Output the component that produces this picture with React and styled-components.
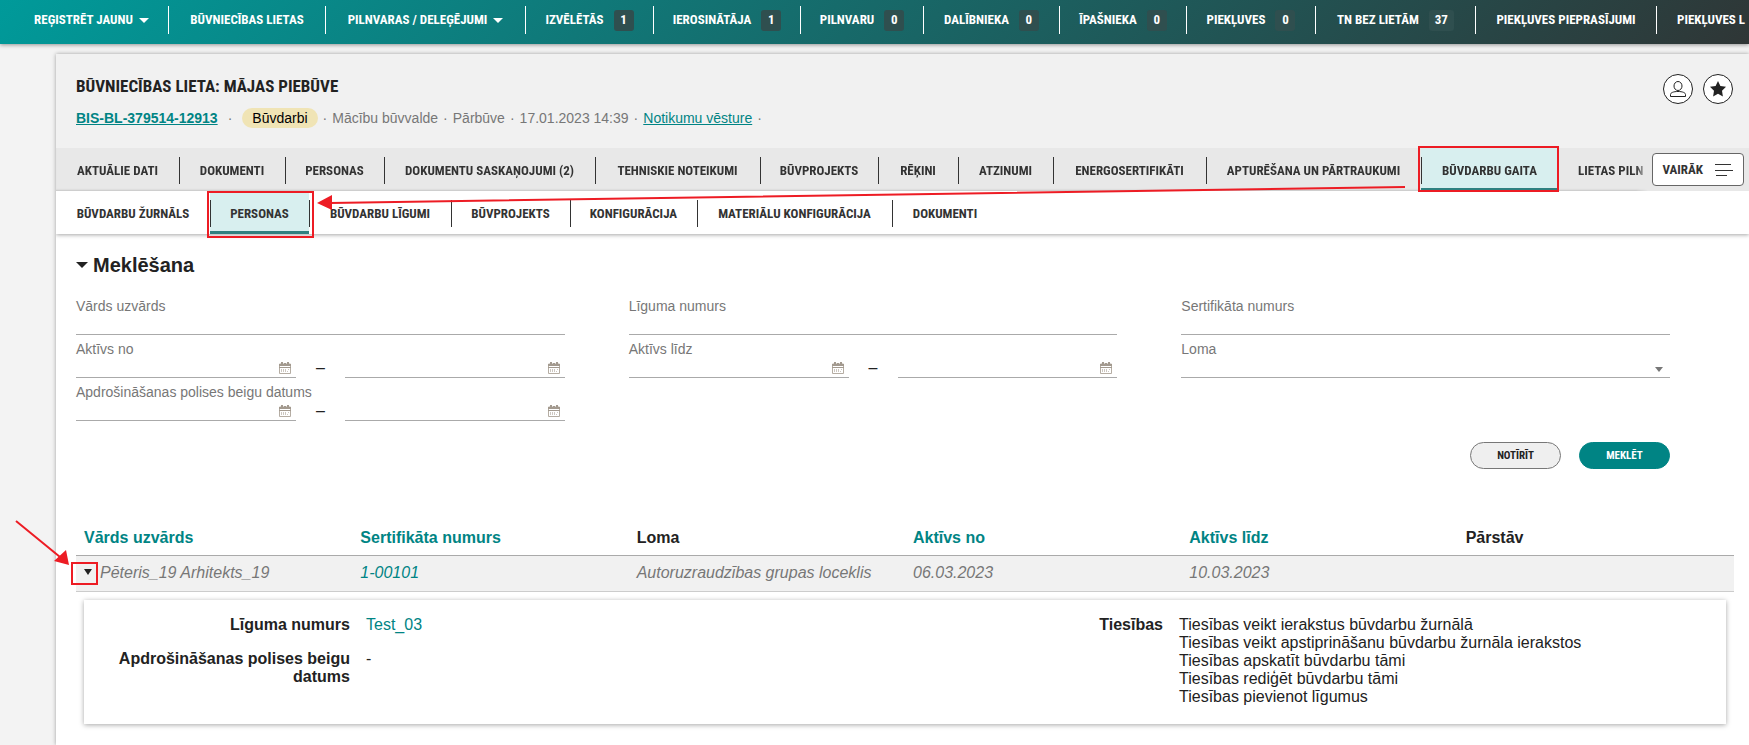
import React from "react";
import styled, { createGlobalStyle } from "styled-components";

const topLinks = [
  { label: "REĢISTRĒT JAUNU", width: 154, menu: true },
  { label: "BŪVNIECĪBAS LIETAS", width: 157 },
  { label: "PILNVARAS / DELEĢĒJUMI", width: 200, menu: true },
  { label: "IZVĒLĒTĀS", width: 128, count: 1 },
  { label: "IEROSINĀTĀJA", width: 147, count: 1 },
  { label: "PILNVARU", width: 123, count: 0 },
  { label: "DALĪBNIEKA", width: 136, count: 0 },
  { label: "ĪPAŠNIEKA", width: 127, count: 0 },
  { label: "PIEKĻUVES", width: 129, count: 0 },
  { label: "TN BEZ LIETĀM", width: 160, count: 37 },
  { label: "PIEKĻUVES PIEPRASĪJUMI", width: 181 },
  { label: "PIEKĻUVES L", width: 120 },
];

const caseTabs = [
  { label: "AKTUĀLIE DATI", width: 123 },
  { label: "DOKUMENTI", width: 106 },
  { label: "PERSONAS", width: 99 },
  { label: "DOKUMENTU SASKAŅOJUMI (2)", width: 211 },
  { label: "TEHNISKIE NOTEIKUMI", width: 165 },
  { label: "BŪVPROJEKTS", width: 118 },
  { label: "RĒĶINI", width: 80 },
  { label: "ATZINUMI", width: 95 },
  { label: "ENERGOSERTIFIKĀTI", width: 153 },
  { label: "APTURĒŠANA UN PĀRTRAUKUMI", width: 215 },
  { label: "BŪVDARBU GAITA", width: 137, active: true },
  { label: "LIETAS PILN", width: 110 },
];

const workTabs = [
  { label: "BŪVDARBU ŽURNĀLS", width: 154 },
  { label: "PERSONAS", width: 99, active: true },
  { label: "BŪVDARBU LĪGUMI", width: 142 },
  { label: "BŪVPROJEKTS", width: 119 },
  { label: "KONFIGURĀCIJA", width: 127 },
  { label: "MATERIĀLU KONFIGURĀCIJA", width: 195 },
  { label: "DOKUMENTI", width: 106 },
];

const columns = [
  { label: "Vārds uzvārds", sortable: true },
  { label: "Sertifikāta numurs", sortable: true },
  { label: "Loma" },
  { label: "Aktīvs no", sortable: true },
  { label: "Aktīvs līdz", sortable: true },
  { label: "Pārstāv" },
];

const rights = [
  "Tiesības veikt ierakstus būvdarbu žurnālā",
  "Tiesības veikt apstiprināšanu būvdarbu žurnāla ierakstos",
  "Tiesības apskatīt būvdarbu tāmi",
  "Tiesības rediģēt būvdarbu tāmi",
  "Tiesības pievienot līgumus",
];

const CalendarIcon = () => (
  <svg width="12" height="13" viewBox="0 0 12 13" aria-hidden="true">
    <path d="M.5 3h11v9.500H.5z" fill="#fff" stroke="#b5ada3" />
    <path d="M0 3h12v2H0zM2 1h2v2H2zM8 1h2v2H8zM5 2h2v1H5z" fill="#a39a8f" />
    <path d="M0 6h12v1H0z" fill="#a39a8f" />
    <path d="M2 8h1v3H2zM4 8h1v3H4zM6 8h1v3H6zM9 8h1v1H9zM8 10h1v1H8z" fill="#cdc7c0" />
  </svg>
);

const DateRange = ({ id, label }) => (
  <Field>
    <Label htmlFor={id}>{label}</Label>
    <Range>
      <DateBox>
        <Input id={id} type="text" />
        <CalendarIcon />
      </DateBox>
      <Dash>–</Dash>
      <DateBox>
        <Input type="text" aria-label={label} />
        <CalendarIcon />
      </DateBox>
    </Range>
  </Field>
);

const App = () => {
  return (
    <Page>
      <GlobalStyle />
      <TopBar>
        {topLinks.map((item) => (
          <TopLink key={item.label} href="#" $width={item.width}>
            {item.label}
            {item.menu && <Caret $size={5} />}
            {item.count !== undefined && <Count>{item.count}</Count>}
          </TopLink>
        ))}
      </TopBar>

      <Card>
        <Header>
          <div>
            <Title>BŪVNIECĪBAS LIETA: MĀJAS PIEBŪVE</Title>
            <Meta>
              <CaseLink href="#">BIS-BL-379514-12913</CaseLink>
              <Dot>·</Dot>
              <Stage>Būvdarbi</Stage>
              <span>·</span>
              <span>Mācību būvvalde</span>
              <span>·</span>
              <span>Pārbūve</span>
              <span>·</span>
              <span>17.01.2023 14:39</span>
              <span>·</span>
              <HistoryLink href="#">Notikumu vēsture</HistoryLink>
              <span>·</span>
            </Meta>
          </div>
          <HeaderActions>
            <RoundButton type="button" aria-label="Profils">
              <svg width="18" height="20" viewBox="0 0 18 20" fill="none" stroke="#222">
                <ellipse cx="9" cy="7" rx="4" ry="4.500" />
                <path d="M1.500 17.500v-2c0-1.800 3-3 7.500-3s7.500 1.200 7.500 3v2z" />
              </svg>
            </RoundButton>
            <RoundButton type="button" aria-label="Izlase">
              <svg width="18" height="18" viewBox="0 0 18 18" fill="#222">
                <path d="M9 1l2.400 5 5.600.8-4 4 .9 5.700L9 13.800l-4.900 2.700.9-5.700-4-4L6.600 6z" />
              </svg>
            </RoundButton>
          </HeaderActions>
        </Header>

        <CaseTabs>
          <TabStrip>
            {caseTabs.map((tab) => (
              <Tab key={tab.label} href="#" $width={tab.width} $active={tab.active}>
                {tab.label}
              </Tab>
            ))}
          </TabStrip>
          <MoreButton type="button">
            VAIRĀK
            <svg width="18" height="14" viewBox="0 0 18 14" stroke="#333">
              <path d="M0 1.500h16M0 7.500h18M1 12.500h11" />
            </svg>
          </MoreButton>
        </CaseTabs>

        <WorkTabs>
          {workTabs.map((tab) => (
            <Tab key={tab.label} href="#" $width={tab.width} $active={tab.active}>
              {tab.label}
            </Tab>
          ))}
        </WorkTabs>

        <SearchForm onSubmit={(e) => e.preventDefault()}>
          <SearchTitle>
            <Caret $size={6} />
            Meklēšana
          </SearchTitle>
          <Fields>
            <Field>
              <Label htmlFor="name">Vārds uzvārds</Label>
              <Input id="name" type="text" />
            </Field>
            <Field>
              <Label htmlFor="contract">Līguma numurs</Label>
              <Input id="contract" type="text" />
            </Field>
            <Field>
              <Label htmlFor="certificate">Sertifikāta numurs</Label>
              <Input id="certificate" type="text" />
            </Field>
            <DateRange id="activeFrom" label="Aktīvs no" />
            <DateRange id="activeTo" label="Aktīvs līdz" />
            <Field>
              <Label htmlFor="role">Loma</Label>
              <SelectBox>
                <Select id="role" />
                <Caret $size={4} />
              </SelectBox>
            </Field>
            <DateRange id="insurance" label="Apdrošināšanas polises beigu datums" />
          </Fields>
          <Actions>
            <FormButton type="reset">NOTĪRĪT</FormButton>
            <FormButton type="submit" $primary>
              MEKLĒT
            </FormButton>
          </Actions>
        </SearchForm>

        <Results>
          <thead>
            <tr>
              {columns.map((col) => (
                <th key={col.label}>
                  {col.sortable ? <SortLink href="#">{col.label}</SortLink> : col.label}
                </th>
              ))}
            </tr>
          </thead>
          <tbody>
            <PersonRow>
              <td>
                <Expand type="button" aria-label="Aizvērt">
                  <svg width="8" height="6" viewBox="0 0 8 6" fill="currentColor">
                    <path d="M0 0h8L4 6z" />
                  </svg>
                </Expand>
                Pēteris_19 Arhitekts_19
              </td>
              <td>
                <SortLink href="#">1-00101</SortLink>
              </td>
              <td>Autoruzraudzības grupas loceklis</td>
              <td>06.03.2023</td>
              <td>10.03.2023</td>
              <td />
            </PersonRow>
            <tr>
              <td colSpan={6}>
                <Details>
                  <DetailList>
                    <dt>Līguma numurs</dt>
                    <dd>
                      <SortLink href="#">Test_03</SortLink>
                    </dd>
                    <dt>Apdrošināšanas polises beigu datums</dt>
                    <dd>-</dd>
                  </DetailList>
                  <DetailList>
                    <dt>Tiesības</dt>
                    <dd>
                      {rights.map((right) => (
                        <div key={right}>{right}</div>
                      ))}
                    </dd>
                  </DetailList>
                </Details>
              </td>
            </tr>
          </tbody>
        </Results>
      </Card>

      {/* red guide marks drawn over the page */}
      <Marks width="1749" height="745" viewBox="0 0 1749 745" aria-hidden="true">
        <g fill="none" stroke="#ed1c24" strokeWidth="2">
          <rect x="1419" y="147" width="139" height="44" />
          <rect x="208" y="192" width="105" height="45" />
          <rect x="72" y="563" width="25" height="21" />
          <path d="M1405 187L330 203M16 521L60 557" />
        </g>
        <path d="M317 203l15-8v15zM69 565l-15-4 12-11z" fill="#ed1c24" />
      </Marks>
    </Page>
  );
};

export default App;

const teal = "#008484";
const condensed = `"Roboto Condensed", "Liberation Sans Narrow", "Liberation Sans", Arial, sans-serif`;

const GlobalStyle = createGlobalStyle`
  * {
    box-sizing: border-box;
  }
  body {
    margin: 0;
    background-color: #f3f3f3;
    color: #222;
    font-family: "Liberation Sans", Arial, sans-serif;
    font-size: 16px;
    line-height: 18px;
  }
`;

const Page = styled.div`
  position: relative;
  min-height: 100vh;
  display: flex;
  flex-direction: column;
  overflow: hidden;
`;

const TopBar = styled.nav`
  display: flex;
  height: 44px;
  padding: 6px 0 10px 15px;
  overflow: hidden;
  background-image: linear-gradient(135deg, #009a9a, #2f3636);
  box-shadow: 0 1px 4px rgba(0, 0, 0, 0.4);
`;

const TopLink = styled.a`
  flex: 0 0 ${(p) => p.$width}px;
  display: flex;
  align-items: center;
  justify-content: center;
  border-right: 1px solid #fff;
  color: #fff;
  font-family: ${condensed};
  font-size: 13px;
  font-weight: bold;
  line-height: 28px;
  white-space: nowrap;
  text-decoration: none;
  gap: 6px;

  &:last-child {
    justify-content: flex-start;
    padding-left: 20px;
  }
`;

const Caret = styled.span`
  display: inline-block;
  border: ${(p) => p.$size}px solid transparent;
  border-top-color: currentColor;
  border-bottom: 0;
`;

const Count = styled.span`
  min-width: 20px;
  height: 21px;
  margin-left: 4px;
  padding: 0 6px;
  border-radius: 3px;
  background-color: #2f4f4f;
  line-height: 20px;
  text-align: center;
`;

const Card = styled.main`
  flex: 1;
  margin: 10px 0 0 56px;
  background-color: #fff;
  box-shadow: 0 0 4px rgba(0, 0, 0, 0.35);
`;

const Header = styled.header`
  display: flex;
  justify-content: space-between;
  height: 94px;
  padding: 20px 16px 0 20px;
  background-color: #f1f1f1;
`;

const Title = styled.h1`
  margin: 0;
  font-family: ${condensed};
  font-size: 17px;
  line-height: 24px;
`;

const Meta = styled.div`
  display: flex;
  align-items: center;
  gap: 5px;
  margin-top: 10px;
  color: #777;
  font-size: 14px;
  line-height: 20px;
`;

const CaseLink = styled.a`
  color: ${teal};
  font-weight: bold;
`;

const HistoryLink = styled.a`
  color: ${teal};
`;

const Dot = styled.span`
  margin: 0 5px;
`;

const Stage = styled.span`
  padding: 0 10px;
  border-radius: 10px;
  background-color: #f0e4b5;
  color: #000;
`;

const HeaderActions = styled.div`
  display: flex;
  gap: 10px;
`;

const RoundButton = styled.button`
  display: flex;
  align-items: center;
  justify-content: center;
  width: 30px;
  height: 30px;
  padding: 0;
  border: 1px solid #222;
  border-radius: 50%;
  background-color: #fff;
`;

const CaseTabs = styled.nav`
  display: flex;
  align-items: center;
  height: 43px;
  background-color: #e8e8e8;
`;

const TabStrip = styled.div`
  display: flex;
  flex: 1;
  min-width: 0;
  overflow: hidden;
  box-shadow: inset 0 -2px 2px -1px rgba(0, 0, 0, 0.15);
  mask-image: linear-gradient(to left, transparent 4px, #000 16px);
`;

const WorkTabs = styled.nav`
  display: flex;
  height: 43px;
  box-shadow: 0 1px 4px rgba(0, 0, 0, 0.35);
  clip-path: inset(0 0 -6px 0);
`;

const Tab = styled.a`
  flex: 0 0 ${(p) => p.$width}px;
  height: 43px;
  padding: 9px 0 0;
  border-bottom: 3px solid ${(p) => (p.$active ? "#2f8080" : "transparent")};
  background-color: ${(p) => (p.$active ? "#d8efef" : "transparent")};
  color: #333;
  font-family: ${condensed};
  font-size: 13px;
  font-weight: bold;
  line-height: 27px;
  text-align: center;
  text-decoration: none;
  white-space: nowrap;

  & + & {
    background-image: linear-gradient(#333, #333);
    background-repeat: no-repeat;
    background-position: 0 9px;
    background-size: 1px 27px;
  }

  ${TabStrip} &:last-child {
    flex-shrink: 1;
    padding-left: 20px;
    background-image: none;
    text-align: left;
  }
`;

const MoreButton = styled.button`
  display: flex;
  align-items: center;
  gap: 12px;
  height: 33px;
  margin-right: 5px;
  padding: 0 10px;
  border: 1px solid #666;
  border-radius: 4px;
  background-color: #fff;
  color: #333;
  font-family: ${condensed};
  font-size: 13px;
  font-weight: bold;
`;

const SearchForm = styled.form`
  padding: 19px 79px 0 20px;
`;

const SearchTitle = styled.h2`
  display: flex;
  align-items: center;
  gap: 5px;
  margin: 0;
  font-size: 20px;
  line-height: 24px;
`;

const Fields = styled.div`
  display: grid;
  grid-template-columns: repeat(3, 1fr);
  column-gap: 64px;
  margin-top: 15px;
`;

const Field = styled.div`
  display: flex;
  flex-direction: column;
  height: 43px;
  padding-top: 6px;
`;

const Label = styled.label`
  color: #777;
  font-size: 14px;
  line-height: 16px;
`;

const Input = styled.input`
  width: 100%;
  height: 21px;
  padding: 0;
  border: 0;
  border-bottom: 1px solid #aaa;
  background-color: transparent;
  outline: 0;
`;

const Range = styled.div`
  display: flex;
`;

const DateBox = styled.div`
  position: relative;
  flex: 1;

  svg {
    position: absolute;
    right: 5px;
    bottom: 5px;
  }
`;

const Dash = styled.span`
  width: 49px;
  line-height: 22px;
  text-align: center;
`;

const SelectBox = styled.div`
  position: relative;
  color: #777;

  ${Caret} {
    position: absolute;
    right: 7px;
    bottom: 6px;
    border-top-width: 5px;
    pointer-events: none;
  }
`;

const Select = styled.select`
  display: block;
  width: 100%;
  height: 21px;
  border: 0;
  border-bottom: 1px solid #aaa;
  background-color: transparent;
  appearance: none;
`;

const Actions = styled.div`
  display: flex;
  justify-content: flex-end;
  gap: 18px;
  margin-top: 21px;
`;

const FormButton = styled.button`
  width: 91px;
  height: 27px;
  padding: 0;
  border: 1px solid ${(p) => (p.$primary ? teal : "#777")};
  border-radius: 14px;
  background-color: ${(p) => (p.$primary ? teal : "#efefef")};
  color: ${(p) => (p.$primary ? "#fff" : "#222")};
  font-family: ${condensed};
  font-size: 11px;
  font-weight: bold;
`;

const Results = styled.table`
  width: calc(100% - 35px);
  margin: 50px 15px 0 20px;
  border-collapse: collapse;
  table-layout: fixed;

  th {
    height: 36px;
    padding: 3px 8px 0;
    border-bottom: 1px solid #aaa;
    text-align: left;
  }

  td {
    padding: 8px;
  }
`;

const SortLink = styled.a`
  color: ${teal};
  text-decoration: none;
`;

const PersonRow = styled.tr`
  height: 36px;
  border-bottom: 1px solid #ccc;
  background-color: #f1f1f1;
  color: #777;
  font-style: italic;
`;

const Expand = styled.button`
  display: inline-flex;
  align-items: flex-start;
  height: 10px;
  margin-right: 8px;
  padding: 0;
  border: 0;
  background-color: transparent;
  color: #222;
  vertical-align: middle;
`;

const Details = styled.div`
  display: grid;
  grid-template-columns: 1fr 1fr;
  padding: 16px 8px 18px;
  background-color: #fff;
  box-shadow: 0 1px 5px rgba(0, 0, 0, 0.35);
`;

const DetailList = styled.dl`
  display: grid;
  grid-template-columns: 258px 1fr;
  align-content: start;
  gap: 16px;
  margin: 0;

  dt {
    font-weight: bold;
    text-align: right;
  }

  dd {
    margin: 0;
  }
`;

const Marks = styled.svg`
  position: absolute;
  top: 0;
  left: 0;
  pointer-events: none;
`;
